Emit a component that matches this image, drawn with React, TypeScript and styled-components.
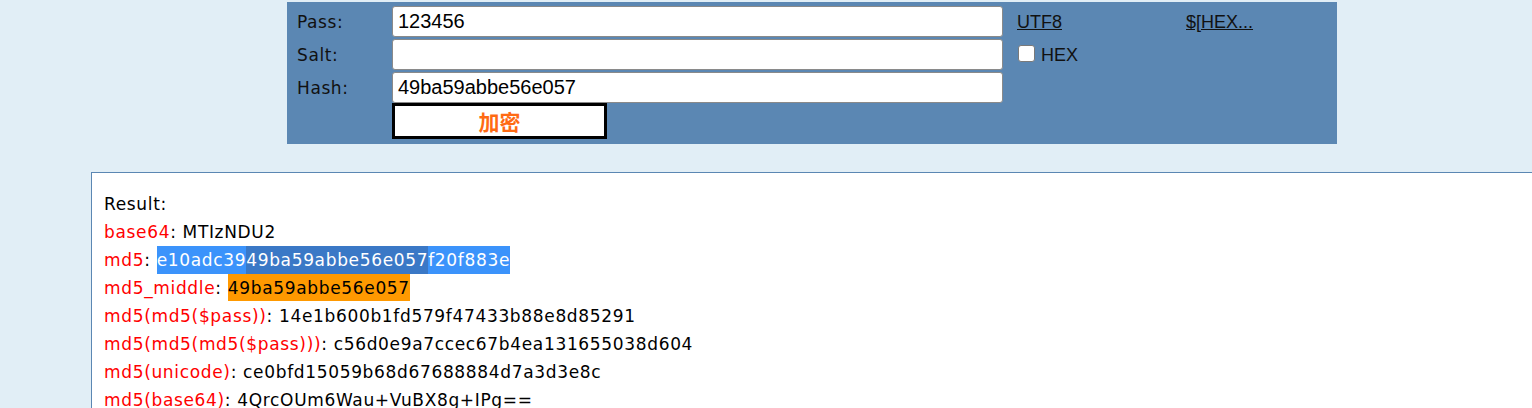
import React from "react";
import styled, { createGlobalStyle } from "styled-components";

const Global = createGlobalStyle`
  html, body { margin: 0; padding: 0; background: #e1eef6; overflow: hidden; }
  body { font-family: "DejaVu Sans", Verdana, sans-serif; }
`;

const Page = styled.div`
  width: 1532px;
  height: 408px;
  padding-top: 2px;
  box-sizing: border-box;
  overflow: hidden;
`;

const Panel = styled.form`
  margin-left: 287px;
  width: 1050px;
  height: 142px;
  box-sizing: border-box;
  background: #5b87b3;
  padding: 4px 0 0 10px;
  display: grid;
  grid-template-columns: 95px 611px 14px 169px 1fr;
  grid-template-rows: 33px 33px 31px 37px;
  align-items: start;
`;

const Label = styled.label<{ $row: number }>`
  grid-column: 1;
  grid-row: ${(p) => p.$row};
  font-family: "DejaVu Sans", Verdana, sans-serif;
  font-size: 17px;
  letter-spacing: 0.6px;
  color: #111;
  line-height: 33px;
`;

const TextInput = styled.input<{ $row: number }>`
  grid-column: 2;
  grid-row: ${(p) => p.$row};
  width: 611px;
  height: 31px;
  box-sizing: border-box;
  border: 1px solid #8a8a8a;
  border-radius: 3px;
  background: #fff;
  padding: 0 0 0 5px;
  font-family: "Liberation Sans", Arial, sans-serif;
  font-size: 20px;
  color: #000;
  outline: none;
`;

const SideLink = styled.a<{ $col: number }>`
  grid-column: ${(p) => p.$col};
  grid-row: 1;
  font-family: "Liberation Sans", Arial, sans-serif;
  font-size: 18px;
  color: #111;
  text-decoration: underline;
  line-height: 33px;
  cursor: pointer;
`;

const CheckRow = styled.label`
  grid-column: 4;
  grid-row: 2;
  display: flex;
  align-items: center;
  gap: 6px;
  font-family: "Liberation Sans", Arial, sans-serif;
  font-size: 18px;
  color: #111;
  height: 33px;
`;

const Check = styled.input`
  appearance: none;
  width: 17px;
  height: 17px;
  margin: -4px 0 0 1px;
  border: 1px solid #7a7a7a;
  border-radius: 3px;
  background: #fff;
  box-sizing: border-box;
`;

const Submit = styled.button`
  grid-column: 2;
  grid-row: 4;
  width: 215px;
  height: 36px;
  box-sizing: border-box;
  border: 3px solid #000;
  background: #fff;
  color: #ff6a13;
  font-family: "Noto Sans CJK SC", sans-serif;
  font-weight: bold;
  font-size: 21px;
  line-height: 1;
  padding: 0;
`;

const ResultBox = styled.div`
  margin: 28px 0 0 91px;
  width: 1500px;
  height: 260px;
  border-top: 1px solid #5b87b3;
  border-left: 1px solid #5b87b3;
  background: #fff;
  padding: 17px 0 0 12px;
  box-sizing: border-box;
  font-family: "DejaVu Sans", Verdana, sans-serif;
  font-size: 17px;
  letter-spacing: 0.66px;
  line-height: 28px;
  color: #000;
`;

const Line = styled.div`
  white-space: nowrap;
`;

const Key = styled.span`
  color: #ff0000;
`;

const Selected = styled.span`
  background: #3b93fb;
  color: #fff;
  padding: 4px 0 4px;
`;

const SelectedInner = styled.span`
  background: #3a78c6;
  padding: 4px 0 4px;
`;

const Middle = styled.span`
  background: #ff9900;
  padding: 4px 0 3px;
`;

const rows: { key: string; value: string }[] = [
  { key: "md5(md5($pass))", value: "14e1b600b1fd579f47433b88e8d85291" },
  { key: "md5(md5(md5($pass)))", value: "c56d0e9a7ccec67b4ea131655038d604" },
  { key: "md5(unicode)", value: "ce0bfd15059b68d67688884d7a3d3e8c" },
  { key: "md5(base64)", value: "4QrcOUm6Wau+VuBX8g+IPg==" },
];

export default function App() {
  return (
    <Page>
      <Global />
      <Panel onSubmit={(e) => e.preventDefault()}>
        <Label $row={1}>Pass:</Label>
        <TextInput $row={1} defaultValue="123456" />
        <SideLink $col={4}>UTF8</SideLink>
        <SideLink $col={5}>$[HEX...</SideLink>

        <Label $row={2}>Salt:</Label>
        <TextInput $row={2} defaultValue="" />
        <CheckRow>
          <Check type="checkbox" />
          HEX
        </CheckRow>

        <Label $row={3}>Hash:</Label>
        <TextInput $row={3} defaultValue="49ba59abbe56e057" />

        <Submit type="submit">加密</Submit>
      </Panel>
      <ResultBox>
        <Line>Result:</Line>
        <Line>
          <Key>base64</Key>: MTIzNDU2
        </Line>
        <Line>
          <Key>md5</Key>:{" "}
          <Selected>
            e10adc39<SelectedInner>49ba59abbe56e057</SelectedInner>f20f883e
          </Selected>
        </Line>
        <Line>
          <Key>md5_middle</Key>: <Middle>49ba59abbe56e057</Middle>
        </Line>
        {rows.map((r) => (
          <Line key={r.key}>
            <Key>{r.key}</Key>: {r.value}
          </Line>
        ))}
      </ResultBox>
    </Page>
  );
}
